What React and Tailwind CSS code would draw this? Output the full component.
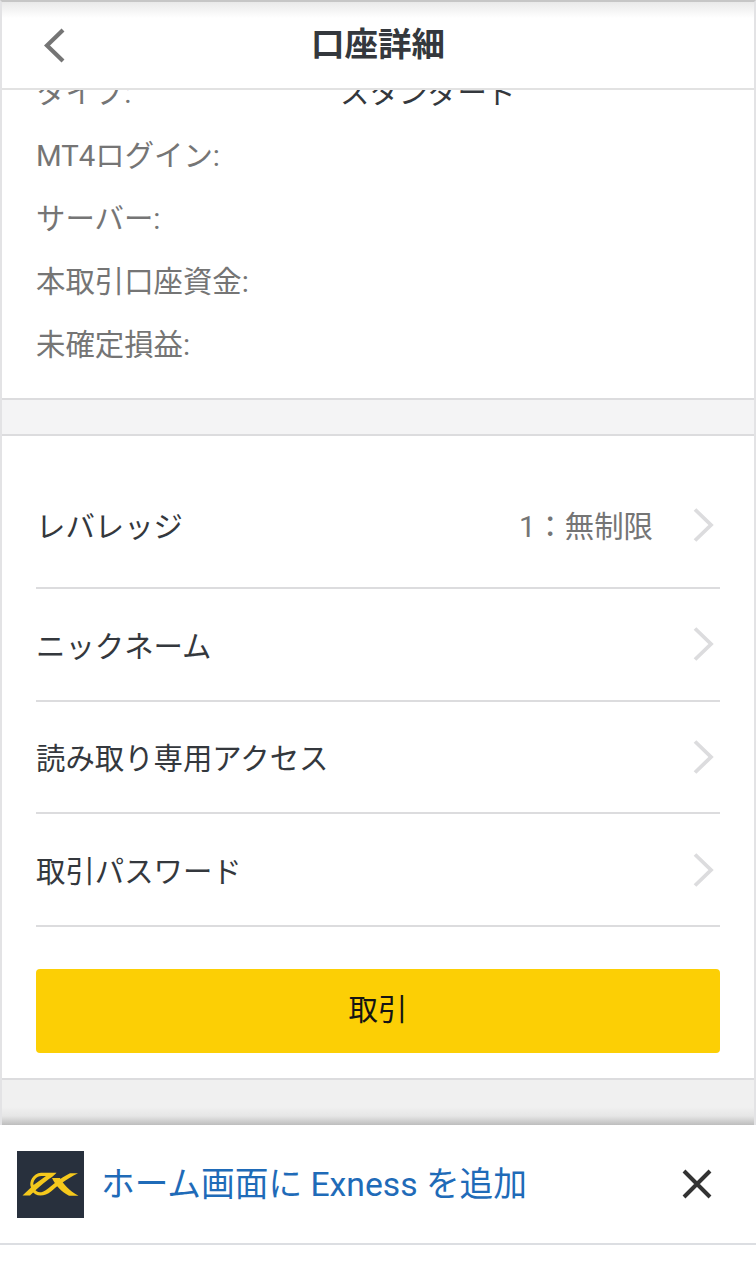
import React from 'react';

const details = [
    { label: 'タイプ:', value: 'スタンダード' },
    { label: 'MT4ログイン:' },
    { label: 'サーバー:' },
    { label: '本取引口座資金:' },
    { label: '未確定損益:' },
];

const settings = [
    { label: 'レバレッジ', value: '1：無制限' },
    { label: 'ニックネーム' },
    { label: '読み取り専用アクセス' },
    { label: '取引パスワード' },
];

const ChevronRight = () => (
    <svg className="w-[22px] h-[36px]" viewBox="0 0 22 36" fill="none" stroke="#dcdcde" strokeWidth="3.8">
        <path d="M2 2.5 L18 18 L2 33.5" />
    </svg>
);

const Logo = () => (
    <svg className="w-[67px] h-[67px] bg-[#28303d] shrink-0" viewBox="0 0 67 67" fill="none">
        <path d="M5.5 44.5 L13 44.5 C19 38.5 28 30.5 35 26 C37 24.5 39 22.5 39.5 21.800 L24 21.800 C16 22.500 11.500 31 14 36.500 Z M16.500 34 C15.500 30 19.500 25 24.500 25 L29 25 Z" fill="#f5c81c" fillRule="evenodd" />
        <path d="M15 39.5 C18 46.500 28 45.500 34 40.500 C39 36 49 28 61 22.200 L53 22.200 C43 27 35 34.500 29 39 C24 42.500 19.500 42 17.500 37.500 Z" fill="#f5c81c" />
        <path d="M35 27 L43 27 C46.500 33.500 52 39.500 61.500 44.800 L52 44.800 C44 40.500 38.500 34.500 35 27 Z" fill="#f5c81c" />
    </svg>
);

const Header = () => (
    <header className="h-[88px] shrink-0 flex items-center px-[34px] border-b-2 border-[#e2e2e2] bg-linear-to-b from-[#e9e9e9] to-white to-[16px]">
        <button className="w-[100px] pl-[8px]">
            <svg className="w-[22px] h-[36px]" viewBox="0 0 22 36" fill="none" stroke="#757575" strokeWidth="4.2">
                <path d="M19 3 L3 18.500 L19 34" />
            </svg>
        </button>
        <h1 className="flex-1 text-center text-[33.500px] leading-[40px] font-bold text-[#34383d]">口座詳細</h1>
        <div className="w-[100px]" />
    </header>
);

const App = () => {
    return (
        <div className="h-[1274px] flex flex-col overflow-hidden bg-white text-[29.400px] font-[Roboto,'Noto_Sans_CJK_JP',sans-serif]">
            <div className="h-[1125px] shrink-0 flex flex-col border-x-2 border-t-2 border-x-[#e3e3e5] border-t-[#c6c6c6]">
                <Header />

                {/* Account details, scrolled under the header */}
                <section className="h-[310px] shrink-0 overflow-hidden border-b-2 border-[#dcdcde] px-[34px]">
                    <div className="-mt-[28px]">
                        {details.map((item) => (
                            <div key={item.label} className="h-[63px] flex items-center">
                                <span className="w-[304px] text-[#757575]">{item.label}</span>
                                <span className="text-[#34383d]">{item.value}</span>
                            </div>
                        ))}
                    </div>
                </section>

                <div className="h-[34px] shrink-0 bg-[#f4f4f5]" />

                <section className="h-[646px] shrink-0 border-y-2 border-[#dcdcde] px-[34px] flex flex-col">
                    <ul className="pt-[40px]">
                        {settings.map((item) => (
                            <li key={item.label} className="h-[112.700px] first:h-[113px] first:pb-[13px] flex items-center border-b-2 border-[#dcdcde] text-[#34383d]">
                                <span className="flex-1 pt-[5px]">{item.label}</span>
                                <span className="text-[#757575] pt-[5px] mr-[40px]">{item.value}</span>
                                <span className="mr-[5px]">
                                    <ChevronRight />
                                </span>
                            </li>
                        ))}
                    </ul>
                    <button className="mt-[42px] h-[84px] pb-[2px] shrink-0 rounded bg-[#fccf05] text-[#141414]">取引</button>
                </section>

                <div className="flex-1 bg-linear-to-b from-[#f0f0f0] from-60% via-[#e6e6e6] via-80% to-[#bdbdbd]" />
            </div>

            {/* Add to home screen banner */}
            <footer className="h-[120px] shrink-0 flex items-center bg-white border-b-2 border-[#dcdee2] pl-[17px] pr-[43px]">
                <Logo />
                <a href="#" className="flex-1 pt-[3px] pl-[17px] text-[33.700px] text-[#1f6bb8]">ホーム画面に Exness を追加</a>
                <svg className="w-[32px] h-[32px]" viewBox="0 0 32 32" fill="none" stroke="#333" strokeWidth="4">
                    <path d="M3 3 L29 29 M29 3 L3 29" />
                </svg>
            </footer>
        </div>
    );
};

export default App;
